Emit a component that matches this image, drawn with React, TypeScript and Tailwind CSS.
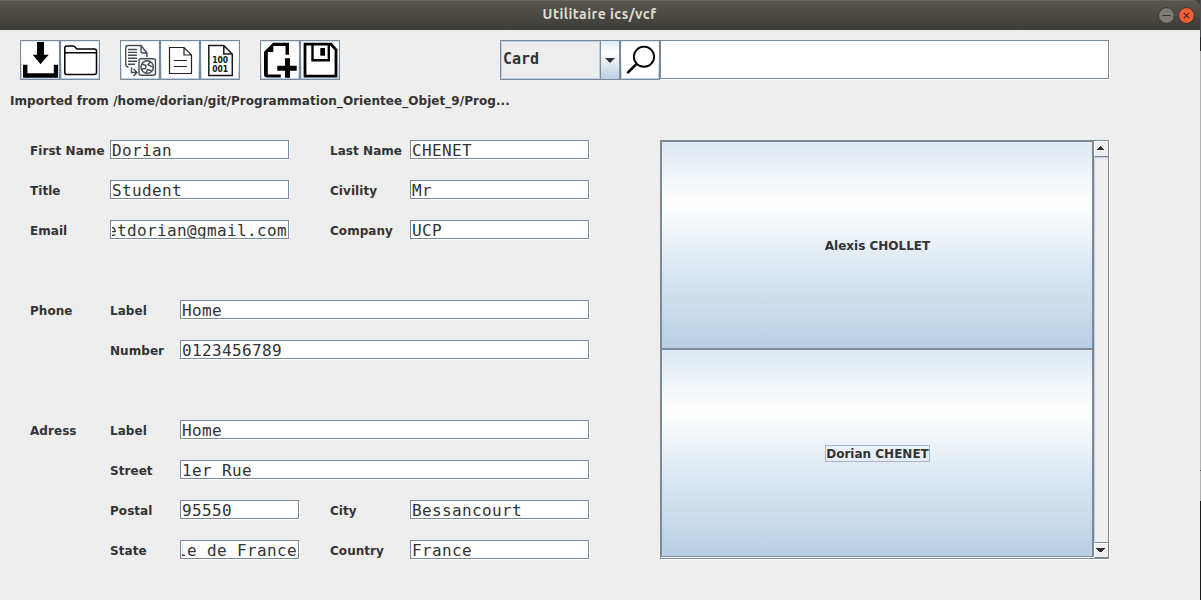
import type { ReactNode } from "react";

const DEJAVU = "font-['DejaVu_Sans',sans-serif]";

function Field({ value, className, end = false }: { value: string; className: string; end?: boolean }) {
  return (
    <div className={`flex h-[19px] border border-[#7a8a99] bg-white px-px shadow-[1px_1px_0_#fff] ${className}`}>
      <div className={`flex h-[17px] flex-1 overflow-hidden ${end ? "justify-end" : ""}`}>
        <span className="shrink-0 whitespace-pre font-['DejaVu_Sans_Mono',monospace] text-[16px] font-normal leading-[19px] tracking-[0.368px] text-[#333]">
          {value}
        </span>
      </div>
    </div>
  );
}

function Label({ children, className }: { children: ReactNode; className: string }) {
  return <div className={`shrink-0 whitespace-nowrap pt-px leading-5 ${className}`}>{children}</div>;
}

function Row({ children, className = "" }: { children: ReactNode; className?: string }) {
  return <div className={`flex h-5 items-start ${className}`}>{children}</div>;
}

function ToolButton({ children }: { children: ReactNode }) {
  return (
    <button className="flex h-10 w-10 shrink-0 items-center justify-center border border-[#7a8a99] bg-linear-to-b from-[#dde8f3] via-white via-30% to-[#b8cfe5]">
      <svg width="36" height="36" viewBox="0 0 36 36" fill="none" stroke="#000" className="bg-white">
        {children}
      </svg>
    </button>
  );
}

const CARD_GRADIENT =
  "bg-[linear-gradient(to_bottom,#dde8f3_0%,#ffffff_30%,#dde8f3_60%,#b8cfe5_100%)]";

function CardButton({ name, focused = false }: { name: string; focused?: boolean }) {
  return (
    <button
      className={`flex h-[208px] w-full items-center justify-center border-y border-l border-r-2 border-[#7a8a99] pl-px pt-px text-[12px] font-bold tracking-normal ${CARD_GRADIENT}`}
    >
      <span className={`border pt-px leading-[14px] ${focused ? "border-[#a3b8cc]" : "border-transparent"}`}>{name}</span>
    </button>
  );
}

function TitleBar() {
  return (
    <header className="flex h-[30px] items-center rounded-tr-[7px] border-t border-[#67645c] bg-linear-to-b from-[#59564e] to-[#3d3c37]">
      <div className="w-[42px]" />
      <h1 className="flex-1 pb-[2px] pr-px text-center font-['Ubuntu','Noto_Sans',sans-serif] text-[14px] font-semibold leading-[27px] tracking-[0.47px] text-[#dfdbd2]">
        Utilitaire ics/vcf
      </h1>
      <div className="flex w-[42px] gap-[3px] pb-px">
        <svg width="17" height="17" viewBox="0 0 17 17">
          <circle cx="8.5" cy="8.5" r="7.9" fill="#7d7b74" stroke="#35342f" />
          <path d="M4.500 8.500h8" stroke="#35342f" />
        </svg>
        <svg width="17" height="17" viewBox="0 0 17 17">
          <circle cx="8.5" cy="8.5" r="7.9" fill="#ee6034" stroke="#35342f" />
          <path d="M5.800 5.800l5.400 5.400M11.200 5.800l-5.400 5.400" stroke="#4a2718" strokeWidth="1.2" />
        </svg>
      </div>
    </header>
  );
}

function Toolbar() {
  return (
    <div className="flex pl-5">
      <ToolButton>
        <path d="M15 0h7v12.700h4.700L18.500 22.300 10.700 12.700H15z" fill="#000" stroke="none" />
        <path d="M3.200 22.700V33.500H34V22.700" strokeWidth="4.400" />
      </ToolButton>
      <ToolButton>
        <path d="M2.800 30.500V6q0-2 2-2H11q1.500 0 2.500 1.500L15 7h17.500q2 0 2 2v21.500q0 2-2 2h-27.700q-2 0-2-2zM2.800 10.700h31.700" strokeWidth="1.500" />
      </ToolButton>
      <div className="w-5" />
      <ToolButton>
        <g stroke="#454b55" strokeWidth="1.400">
          <path d="M6.500 25q-2.800 0-2.800-3V6q0-2.500 2.800-2.500H19l6 7.500v4M19 3.500V9q0 2 2 2h4" />
          <path d="M6 7.500h9M6 10.400h9M6 13.300h9M6 16.200h9M6 19.200h9M6 22.200h7" />
          <path d="M9.500 25.500v5h5M11.500 27l3.500 3.500-3.500 3.500" />
          <rect x="17" y="16.700" width="16.500" height="16.500" rx="2" />
          <circle cx="25.200" cy="25" r="6.200" />
          <path d="M20 22l4 1.500-.5 3-4 .5M28.500 19.700l-2.500 3 5 2.500M24 31l1.500-3.500 4 1" />
        </g>
      </ToolButton>
      <ToolButton>
        <g stroke="#222" strokeWidth="1.200">
          <path d="M7.500 5.500H22l7.500 7.500v18.500h-22zM22 5.500V13h7.500" />
          <path d="M12 18.500h13M12 24.500h13" />
        </g>
      </ToolButton>
      <ToolButton>
        <path d="M6.800 3.500h15l8.500 8.500v21.500H6.800zM21.800 3.500V12h8.500" stroke="#1a1a1a" strokeWidth="1.500" />
        <g fill="#111" stroke="none" className="font-['DejaVu_Sans',sans-serif] text-[8.500px] font-bold">
          <text x="10.200" y="21.300" textLength="16" lengthAdjust="spacingAndGlyphs">100</text>
          <text x="10.200" y="30.300" textLength="16" lengthAdjust="spacingAndGlyphs">001</text>
        </g>
      </ToolButton>
      <div className="w-5" />
      <ToolButton>
        <path d="M11 .7h16v12h-3.500V4H11.300v6H5.800v22.500h13v3H5q-3 0-3-3V9.700z" fill="#000" stroke="none" />
        <path d="M25.500 16.300v19.400M15.300 26.200h19.400" strokeWidth="5" />
      </ToolButton>
      <ToolButton>
        <path d="M3 2.200h26l5 5.500v26.500H3z" strokeWidth="2.800" />
        <path d="M10.500 2v16.200h16.300V2" strokeWidth="2.400" />
        <path d="M18.300 6H23v7.700h-4.700z" fill="#000" stroke="none" />
      </ToolButton>
      <div className="w-40" />
      <div className="flex h-10 w-[120px] border border-[#7a8a99]">
        <div className="flex-1 border border-[#b8cfe5] pl-px pt-px font-['DejaVu_Sans_Mono',monospace] text-[15px] font-bold leading-[33px] tracking-normal text-[#333]">
          Card
        </div>
        <div className="flex w-[19px] items-center justify-center border-l border-[#7a8a99] bg-linear-to-b from-[#dde8f3] via-white via-30% to-[#b8cfe5]">
          <svg width="10" height="5" viewBox="0 0 10 5" className="mt-px">
            <path d="M0 0h10L5 5z" fill="#333" />
          </svg>
        </div>
      </div>
      <ToolButton>
        <circle cx="22" cy="14.700" r="10.100" strokeWidth="1.900" />
        <path d="M14.500 22L5.300 31.200" strokeWidth="2.500" />
      </ToolButton>
      <div className="h-[39px] w-[449px] border border-[#7a8a99] bg-white shadow-[1px_1px_0_#fff]" />
    </div>
  );
}

function CardForm() {
  return (
    <div className="flex w-[630px] flex-col gap-5 pl-[30px]">
      <Row>
        <Label className="w-20">First Name</Label>
        <Field value="Dorian" className="w-[179px]" />
        <Label className="ml-[41px] w-20">Last Name</Label>
        <Field value="CHENET" className="w-[179px]" />
      </Row>
      <Row>
        <Label className="w-20">Title</Label>
        <Field value="Student" className="w-[179px]" />
        <Label className="ml-[41px] w-20">Civility</Label>
        <Field value="Mr" className="w-[179px]" />
      </Row>
      <Row>
        <Label className="w-20">Email</Label>
        <Field value="etdorian@gmail.com" className="w-[179px]" end />
        <Label className="ml-[41px] w-20">Company</Label>
        <Field value="UCP" className="w-[179px]" />
      </Row>
      <Row className="mt-10">
        <Label className="w-20">Phone</Label>
        <Label className="w-[70px]">Label</Label>
        <Field value="Home" className="w-[409px]" />
      </Row>
      <Row>
        <Label className="ml-20 w-[70px]">Number</Label>
        <Field value="0123456789" className="w-[409px]" />
      </Row>
      <Row className="mt-10">
        <Label className="w-20">Adress</Label>
        <Label className="w-[70px]">Label</Label>
        <Field value="Home" className="w-[409px]" />
      </Row>
      <Row>
        <Label className="ml-20 w-[70px]">Street</Label>
        <Field value="1er Rue" className="w-[409px]" />
      </Row>
      <Row>
        <Label className="ml-20 w-[70px]">Postal</Label>
        <Field value="95550" className="w-[119px]" />
        <Label className="ml-[31px] w-20">City</Label>
        <Field value="Bessancourt" className="w-[179px]" />
      </Row>
      <Row>
        <Label className="ml-20 w-[70px]">State</Label>
        <Field value="Ile de France" className="w-[119px]" end />
        <Label className="ml-[31px] w-20">Country</Label>
        <Field value="France" className="w-[179px]" />
      </Row>
    </div>
  );
}

function ScrollBar() {
  return (
    <div className="flex w-[14px] flex-col">
      <div className="flex h-4 justify-center border-b border-l border-t border-b-[#7a8a99] border-l-white border-t-white pt-1">
        <svg width="7" height="4" viewBox="0 0 7 4" className="mr-[2px]" shapeRendering="crispEdges">
          <path d="M3 0h1v1h1v1h1v1h1v1H0V3h1V2h1V1h1z" fill="#333" />
        </svg>
      </div>
      <div className="flex-1 border-l border-t border-[#b8cfe5]" />
      <div className="flex h-4 justify-center border-b border-l border-t border-b-[#7a8a99] border-l-white border-t-[#7a8a99] pt-[5px] shadow-[inset_0_1px_0_#fff]">
        <svg width="9" height="4" viewBox="0 0 9 4" className="mr-[2px]" shapeRendering="crispEdges">
          <path d="M0 0h9v1H8v1H7v1H6v1H3V3H2V2H1V1H0z" fill="#333" />
        </svg>
      </div>
    </div>
  );
}

export default function App() {
  return (
    <div className={`flex h-[600px] w-[1201px] overflow-hidden bg-[#3c3f41] text-[12px] font-bold tracking-[0.05px] text-[#333] ${DEJAVU}`}>
      <div className="flex w-[1200px] flex-col">
        <TitleBar />
        <main className="flex-1 bg-[#eeeeee] pt-[10px]">
          <Toolbar />
          <p className="h-[60px] pl-[10px] pt-[11px] leading-5">
            Imported from /home/dorian/git/Programmation_Orientee_Objet_9/Prog...
          </p>
          <div className="flex">
            <CardForm />
            <div className="ml-[30px] flex h-[419px] w-[449px] border border-[#7a8a99] shadow-[1px_1px_0_#fff]">
              <div className="w-[433px] bg-white">
                <CardButton name="Alexis CHOLLET" />
                <CardButton name="Dorian CHENET" focused />
              </div>
              <ScrollBar />
            </div>
          </div>
        </main>
      </div>
      <div className="flex w-px flex-col">
        <div className="h-[37px] bg-[#4b4e50]" />
        <div className="h-[14px] bg-[#262626]" />
        <div className="h-[419px] bg-[#b0b0b0]" />
        <div className="h-px bg-[#555]" />
        <div className="h-[30px] bg-[#b0b0b0]" />
        <div className="flex-1 bg-[#1c1c1c]" />
      </div>
    </div>
  );
}
